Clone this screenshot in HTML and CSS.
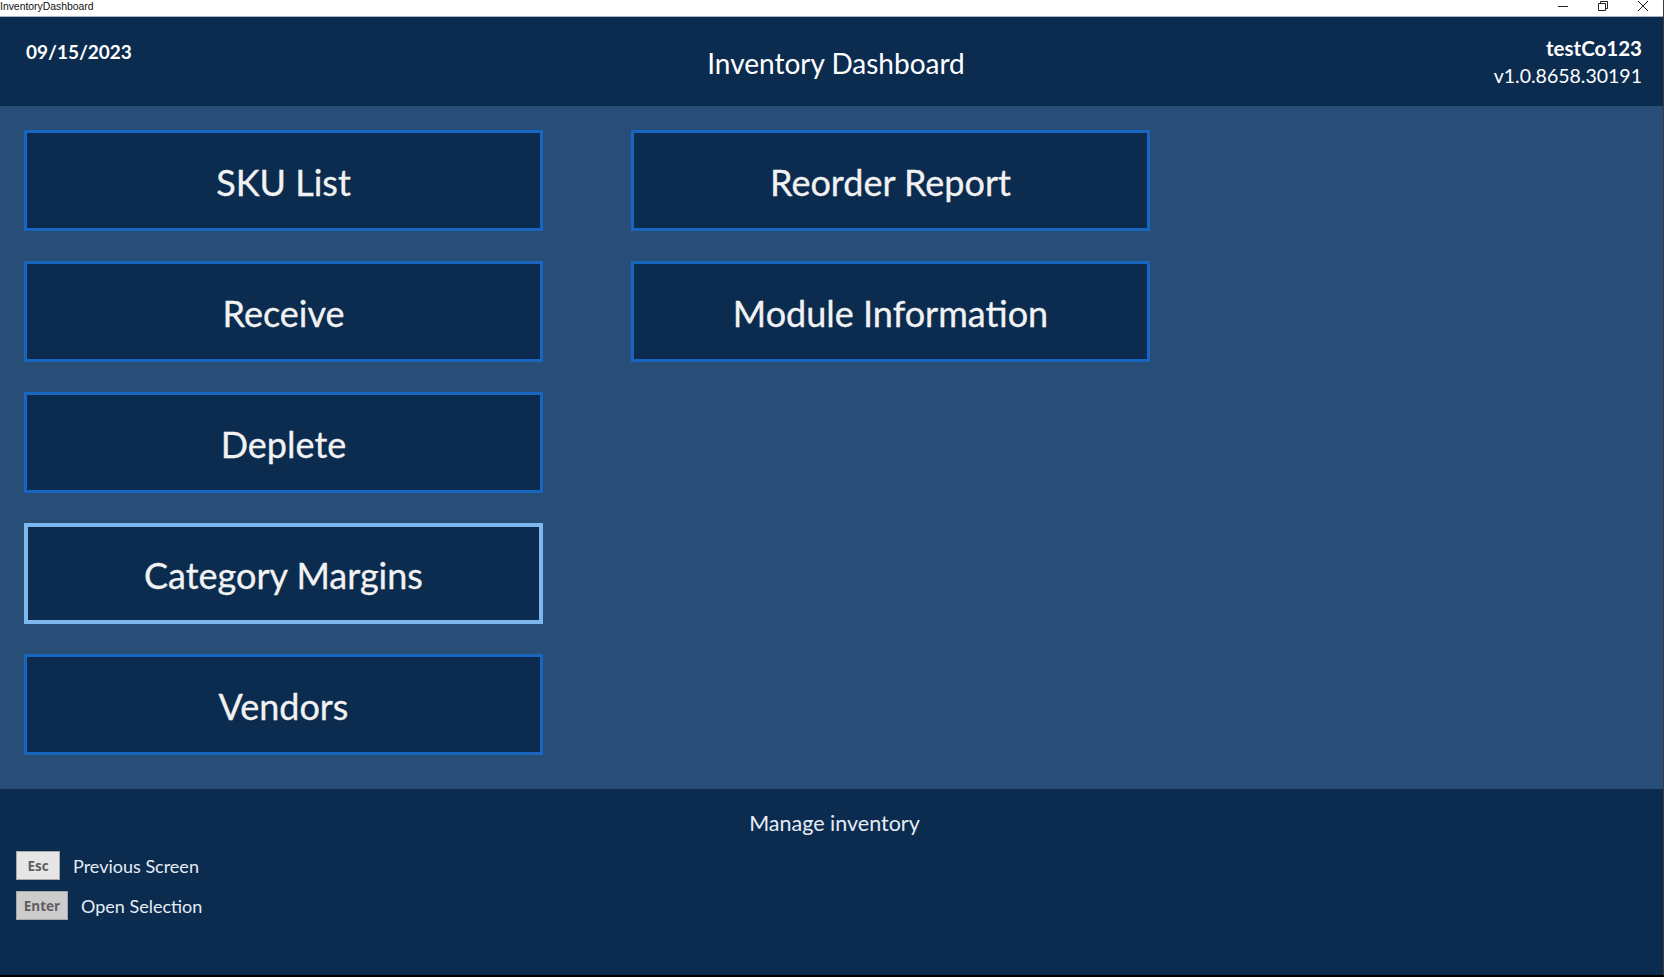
FILE: index.html
```html
<!DOCTYPE html>
<html lang="en">
<head>
<meta charset="utf-8">
<title>InventoryDashboard</title>
<link rel="stylesheet" href="styles.css">
</head>
<body>
<div class="window">
  <div class="titlebar">
    <span class="titlebar-text">InventoryDashboard</span>
    <div class="win-controls">
      <svg class="wc" width="12" height="12" viewBox="0 0 12 12"><path d="M1 6.5h10" stroke="#222" stroke-width="1" fill="none"/></svg>
      <svg class="wc" width="12" height="12" viewBox="0 0 12 12"><path d="M1.5 3.5h7v7h-7z M3.5 3.5v-2h7v7h-2" stroke="#222" stroke-width="1" fill="none"/></svg>
      <svg class="wc" width="12" height="12" viewBox="0 0 12 12"><path d="M1 1l10 10M11 1L1 11" stroke="#222" stroke-width="1" fill="none"/></svg>
    </div>
  </div>
  <header class="header">
    <div class="date">09/15/2023</div>
    <div class="title">Inventory Dashboard</div>
    <div class="company">
      <div class="company-name">testCo123</div>
      <div class="version">v1.0.8658.30191</div>
    </div>
  </header>
  <main class="main">
    <div class="col">
      <button class="tile">SKU List</button>
      <button class="tile">Receive</button>
      <button class="tile">Deplete</button>
      <button class="tile tile-selected">Category Margins</button>
      <button class="tile">Vendors</button>
    </div>
    <div class="col">
      <button class="tile">Reorder Report</button>
      <button class="tile">Module Information</button>
    </div>
  </main>
  <footer class="footer">
    <div class="hint">Manage inventory</div>
    <div class="keys">
      <div class="keyrow"><span class="key key-esc">Esc</span><span class="keylabel">Previous Screen</span></div>
      <div class="keyrow"><span class="key key-enter">Enter</span><span class="keylabel">Open Selection</span></div>
    </div>
  </footer>
</div>
</body>
</html>
```
FILE: styles.css
```css
* { box-sizing: border-box; }
html, body {
  margin: 0;
  padding: 0;
  width: 1664px;
  height: 977px;
  overflow: hidden;
  background: #000;
}
.window {
  width: 1664px;
  height: 975px;
  display: flex;
  flex-direction: column;
  border-right: 1px solid #3a3a3a;
  font-family: Lato, "Open Sans", sans-serif;
}
.titlebar {
  height: 17px;
  background: #fff;
  border-bottom: 1px solid #a9b3bd;
  display: flex;
  align-items: center;
  justify-content: space-between;
}
.titlebar-text {
  font-family: "Liberation Sans", Arial, sans-serif;
  font-size: 10.4px;
  color: #111;
  line-height: 14px;
  margin-top: -2px;
}
.win-controls {
  display: flex;
  gap: 28px;
  padding-right: 14px;
  align-self: flex-start;
}
.wc { display: block; }
.header {
  height: 89px;
  background: #0b2c4f;
  color: #fff;
  display: flex;
  align-items: flex-start;
  justify-content: space-between;
  padding: 0 21px 0 26px;
}
.date {
  font-size: 19px;
  font-weight: 700;
  margin-top: 23px;
  width: 300px;
}
.title {
  font-size: 28px;
  margin-top: 29px;
  margin-left: 4px;
}
.company {
  width: 300px;
  text-align: right;
  margin-top: 18px;
}
.company-name {
  font-size: 20.5px;
  font-weight: 700;
  line-height: 27px;
}
.version {
  font-size: 19.5px;
  line-height: 27px;
}
.main {
  flex: 1;
  background: #284e77;
  display: flex;
  gap: 88px;
  padding: 24px 0 0 24px;
}
.col {
  display: flex;
  flex-direction: column;
  gap: 30px;
  width: 519px;
}
.tile {
  height: 101px;
  background: #0b2c4f;
  border: 3px solid #1966c0;
  color: #f2f2f2;
  font-family: Lato, "Open Sans", sans-serif;
  font-size: 36px;
  -webkit-text-stroke: 0.3px #f2f2f2;
  padding: 3px 0 0 0;
  text-align: center;
}
.tile-selected {
  border: 4px solid #7db7f0;
}
.footer {
  height: 186px;
  background: #0b2c4f;
  color: #e6edf5;
  padding-top: 20px;
}
.hint {
  text-align: center;
  font-size: 21.5px;
  margin-left: 6px;
  line-height: 28px;
}
.keys {
  margin-top: 14px;
  padding-left: 16px;
  display: flex;
  flex-direction: column;
  gap: 11px;
}
.keyrow {
  display: flex;
  align-items: center;
}
.key {
  height: 29px;
  display: flex;
  align-items: center;
  justify-content: center;
  font-family: "Open Sans", sans-serif;
  font-weight: 700;
  font-size: 13.5px;
  color: #5e5e5e;
  border: 1px solid #a6a6a6;
}
.key-esc {
  width: 44px;
  background: #e6e6e6;
}
.key-enter {
  width: 52px;
  background: #cccccc;
}
.keylabel {
  font-size: 18px;
  margin-left: 13px;
}
```
